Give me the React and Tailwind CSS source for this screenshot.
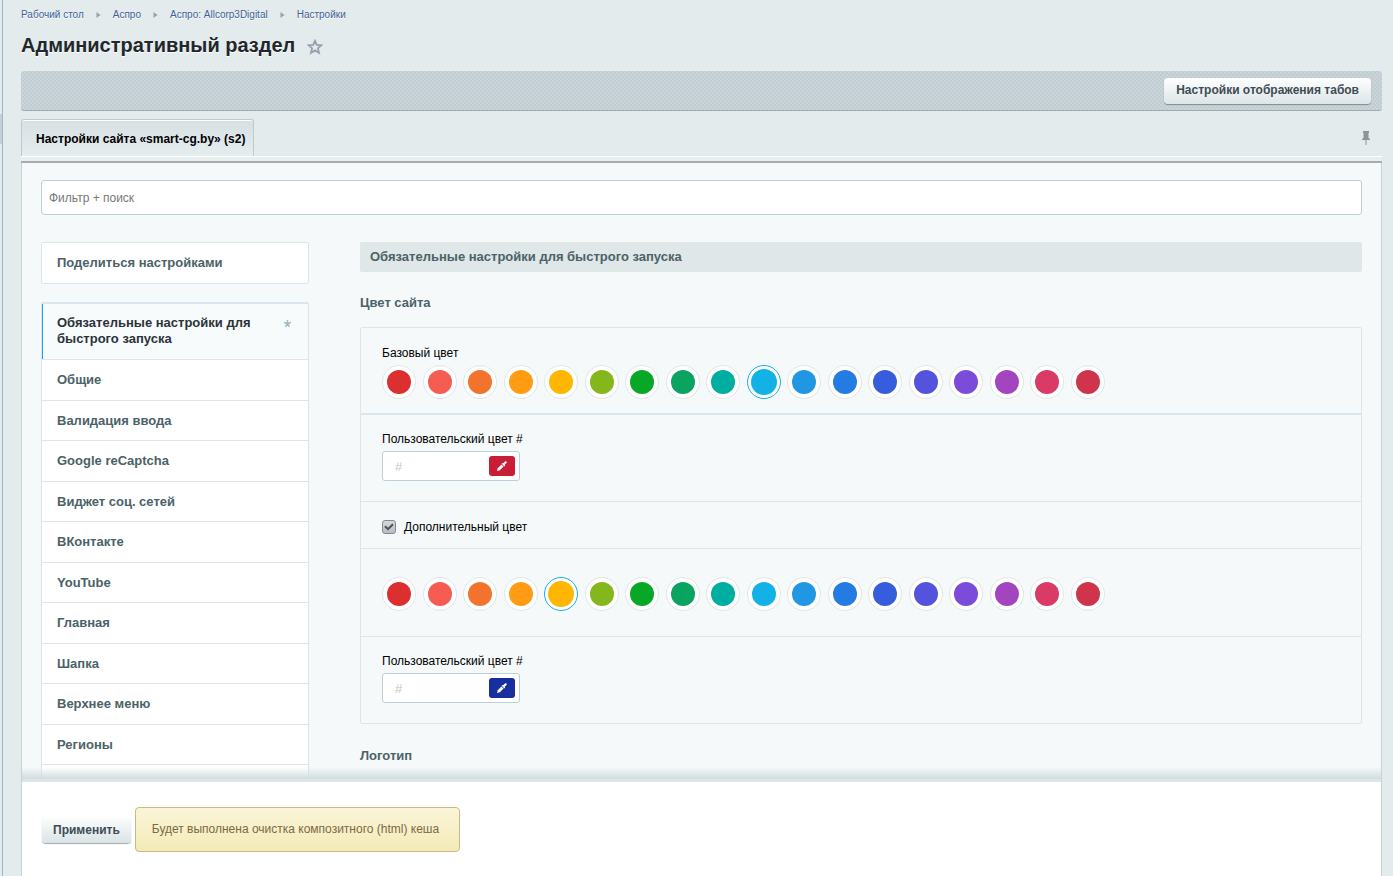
import React, { useState } from "react";

const crumbs = ["Рабочий стол", "Аспро", "Аспро: Allcorp3Digital", "Настройки"];

const sections = [
  "Общие",
  "Валидация ввода",
  "Google reCaptcha",
  "Виджет соц. сетей",
  "ВКонтакте",
  "YouTube",
  "Главная",
  "Шапка",
  "Верхнее меню",
  "Регионы",
];

const colors = [
  { value: "dc3030", className: "bg-[#dc3030]" },
  { value: "f55d53", className: "bg-[#f55d53]" },
  { value: "f2732b", className: "bg-[#f2732b]" },
  { value: "ff9c14", className: "bg-[#ff9c14]" },
  { value: "ffb600", className: "bg-[#ffb600]" },
  { value: "84b71b", className: "bg-[#84b71b]" },
  { value: "08a826", className: "bg-[#08a826]" },
  { value: "0ba360", className: "bg-[#0ba360]" },
  { value: "00ada1", className: "bg-[#00ada1]" },
  { value: "12b2e7", className: "bg-[#12b2e7]" },
  { value: "2196e2", className: "bg-[#2196e2]" },
  { value: "247ce3", className: "bg-[#247ce3]" },
  { value: "365edc", className: "bg-[#365edc]" },
  { value: "5553db", className: "bg-[#5553db]" },
  { value: "7b4cd9", className: "bg-[#7b4cd9]" },
  { value: "a345be", className: "bg-[#a345be]" },
  { value: "da3a66", className: "bg-[#da3a66]" },
  { value: "d0344c", className: "bg-[#d0344c]" },
];

function ColorSwatches({ name, label, initial }) {
  const [selected, setSelected] = useState(initial);

  return (
    <div
      role="radiogroup"
      aria-label={label}
      className="flex max-w-[723px] justify-between"
    >
      {colors.map((color) => (
        <label
          key={color.value}
          aria-label={`#${color.value}`}
          className="relative flex size-[34px] cursor-pointer items-center justify-center rounded-full border border-[#e3e6e6] bg-white has-checked:border-[#12b2e7]"
        >
          <input
            type="radio"
            name={name}
            value={color.value}
            checked={selected === color.value}
            onChange={() => setSelected(color.value)}
            className="peer absolute inset-0 cursor-pointer opacity-0"
          />
          <span
            className={`size-6 rounded-full peer-checked:size-[26px] ${color.className}`}
          />
        </label>
      ))}
    </div>
  );
}

function CustomColor({ id, buttonClass }) {
  const [value, setValue] = useState("");

  return (
    <div className="border-t border-[#dbe6ec] px-[21px] pt-4 pb-5">
      <label htmlFor={id} className="block leading-4">
        Пользовательский цвет #
      </label>
      <div className="mt-1 flex h-[30px] w-[138px] items-center rounded-[3px] border border-[#bdd0d9] bg-white pr-1">
        <input
          id={id}
          type="text"
          placeholder="#"
          value={value}
          onChange={(e) => setValue(e.target.value)}
          className="h-full min-w-0 flex-1 pl-3 text-[13px] outline-none placeholder:text-[#c3c6c8]"
        />
        <button
          type="button"
          aria-label="Выбрать цвет"
          className={`flex h-5 w-[26px] items-center justify-center rounded-[3px] text-white ${buttonClass}`}
        >
          <svg width="10" height="10" viewBox="0 0 10 10" fill="currentColor">
            <path d="M0 10L0.8 7.2L4.4 3.4L6.6 5.6L2.8 9.2Z" />
            <path d="M4.6 2.6L5.6 1.9L6.2 2.3L7.7 0.7C8.9 -0.6 10.6 1.1 9.3 2.3L7.7 3.8L8.1 4.4L7.4 5.4Z" />
          </svg>
        </button>
      </div>
    </div>
  );
}

function Header() {
  return (
    <header>
      <nav className="flex h-[29px] items-center gap-3 text-[10px] text-[#3f5f96]">
        {crumbs.map((crumb, index) => (
          <React.Fragment key={crumb}>
            {index > 0 && (
              <svg width="5" height="6" viewBox="0 0 5 6" fill="#98a4aa">
                <path d="M0.5 0L4.5 3L0.5 6Z" />
              </svg>
            )}
            <a href="#" className="[text-shadow:0_1px_0_#fff]">
              {crumb}
            </a>
          </React.Fragment>
        ))}
      </nav>

      <div className="flex h-[42px] items-start gap-3 pt-1">
        <h1 className="text-[20px] leading-6 font-bold text-[#23272b] [text-shadow:0_1px_0_#fff]">
          Административный раздел
        </h1>
        <button type="button" aria-label="В избранное" className="mt-1.5">
          <svg
            width="16"
            height="16"
            viewBox="0 0 16 16"
            fill="none"
            stroke="#97a1ad"
            strokeWidth="1.8"
          >
            <path d="M8 1.8L9.8 5.9L14.4 6.3L10.9 9.3L12 13.9L8 11.4L4 13.9L5.1 9.3L1.6 6.3L6.2 5.9Z" />
          </svg>
        </button>
      </div>
    </header>
  );
}

function Sidebar() {
  return (
    <nav className="w-[268px] shrink-0 text-[13px] font-bold text-[#4b6267]">
      <a
        href="#"
        className="flex h-[42px] items-center rounded-xs border border-[#dbe6ec] bg-white px-[15px]"
      >
        Поделиться настройками
      </a>

      <div className="mt-[18px] rounded-xs border border-t-2 border-[#dbe6ec] bg-white pb-6">
        <a
          href="#"
          className="flex h-[55px] justify-between border-l border-[#12a9ee] bg-[#f7fbfc] pt-[11px] pr-4 pl-3.5 leading-4 text-[#2b3338]"
        >
          <span className="w-[200px]">Обязательные настройки для быстрого запуска</span>
          <svg
            width="9"
            height="9"
            viewBox="0 0 9 9"
            className="mt-1"
            stroke="#a3bbc3"
            strokeWidth="1.5"
          >
            <path d="M4.5 4.5V1M4.5 4.5L1 3.5M4.5 4.5L8 3.5M4.5 4.5L2.5 7.8M4.5 4.5L6.5 7.8" />
          </svg>
        </a>
        <ul className="border-b border-[#dbe6ec]">
          {sections.map((section) => (
            <li key={section} className="odd:h-[41px] even:h-10">
              <a
                href="#"
                className="flex h-full items-center border-t border-[#dbe6ec] px-[15px]"
              >
                {section}
              </a>
            </li>
          ))}
        </ul>
      </div>
    </nav>
  );
}

function ColorSettings() {
  const [extra, setExtra] = useState(true);

  return (
    <section className="min-w-0 flex-1 text-[12px] text-black">
      <h2 className="h-[30px] rounded-xs bg-[#dfe7e8] px-2.5 text-[13px] leading-[30px] font-bold text-[#4b6267]">
        Обязательные настройки для быстрого запуска
      </h2>
      <h3 className="mt-[23px] text-[13px] leading-4 font-bold text-[#4b6267]">
        Цвет сайта
      </h3>

      <div className="mt-4 rounded-xs border border-[#dbe6ec]">
        <div className="px-[21px] pt-[17px] pb-3.5">
          <p className="mb-1 leading-4">Базовый цвет</p>
          <ColorSwatches name="base" label="Базовый цвет" initial="12b2e7" />
        </div>
        <div className="border-t border-[#dbe6ec]">
          <CustomColor id="base-custom" buttonClass="bg-[#c91c37]" />
        </div>

        <div className="border-t border-[#dbe6ec] px-[21px]">
          <label className="flex h-[46px] items-center gap-2 pt-1">
            <span className="relative flex">
              <input
                type="checkbox"
                checked={extra}
                onChange={(e) => setExtra(e.target.checked)}
                className="peer size-3.5 appearance-none rounded-[3px] border border-[#84898d] bg-linear-to-b from-[#d5dadc] to-[#b7bdc1]"
              />
              <svg
                width="14"
                height="14"
                viewBox="0 0 14 14"
                fill="none"
                stroke="#4b5257"
                strokeWidth="2"
                className="pointer-events-none absolute inset-0 hidden peer-checked:block"
              >
                <path d="M3 6.2L6 9.2L11 4.2" />
              </svg>
            </span>
            Дополнительный цвет
          </label>
        </div>

        <div className="border-t border-[#dbe6ec] px-[21px] pt-7 pb-[25px]">
          <ColorSwatches name="extra" label="Дополнительный цвет" initial="ffb600" />
        </div>
        <CustomColor id="extra-custom" buttonClass="bg-[#182fa0]" />
      </div>

      <h3 className="mt-6 text-[13px] leading-4 font-bold text-[#4b6267]">
        Логотип
      </h3>
    </section>
  );
}

export default function App() {
  return (
    <div className="flex h-screen bg-[#e3ebed] font-['Liberation_Sans',Arial,sans-serif]">
      <div className="w-[3px] shrink-0 border-r border-[#9fb8c8] pt-[114px]">
        <div className="h-[30px] bg-[#c5d0d6]" />
      </div>

      <div className="flex min-w-0 flex-1 flex-col pr-[11px] pl-[18px]">
        <Header />

        <div className="flex h-10 shrink-0 items-center justify-end rounded-[3px] border-b border-[#a0abae] bg-[#cad5d9] bg-[radial-gradient(#c0ccd1_25%,transparent_25%),radial-gradient(#c0ccd1_25%,transparent_25%)] bg-[size:4px_4px] bg-[position:0_0,2px_2px] px-[11px]">
          <button
            type="button"
            className="h-[26px] rounded-[4px] bg-linear-to-b from-white to-[#dbe5e8] px-3 pb-0.5 text-[12px] font-bold text-[#3f4b54] shadow-[0_1px_1px_#7f8b90]"
          >
            Настройки отображения табов
          </button>
        </div>

        <div className="mt-2 flex shrink-0 items-end justify-between">
          <button
            type="button"
            className="h-[37px] rounded-t-[3px] border border-b-0 border-[#c0cacd] bg-linear-to-b from-[#d6dfe2] to-[#e5edef] pt-0.5 pr-2 pl-3.5 text-[12px] font-bold text-black shadow-[inset_0_1px_0_#fff]"
          >
            Настройки сайта «smart-cg.by» (s2)
          </button>
          <button type="button" aria-label="Закрепить" className="mr-[11px] mb-2.5">
            <svg width="10" height="16" viewBox="0 0 10 16" fill="#8b959a">
              <path d="M2 1H8V3H7.5V8L9 9V10H1V9L2.5 8V3H2Z" />
              <path d="M4.5 10H5.5V15H4.5Z" />
            </svg>
          </button>
        </div>
        <div className="h-[7px] shrink-0 border-t border-b-2 border-t-white border-b-[#a5adaf] bg-[#e8eff0]" />

        <main className="flex min-h-0 flex-1 flex-col border-x border-[#c8d2d4] bg-[#f5f9fa]">
          <div className="min-h-0 flex-1 overflow-y-auto px-[19px] pt-[17px] [scrollbar-width:none]">
            <input
              type="search"
              aria-label="Фильтр + поиск"
              placeholder="Фильтр + поиск"
              className="h-[35px] w-full rounded-[3px] border border-[#bdd0d9] bg-white px-[7px] text-[12px] outline-none placeholder:text-[#777]"
            />
            <div className="mt-[27px] flex gap-[51px]">
              <Sidebar />
              <ColorSettings />
            </div>
          </div>

          <footer className="relative flex shrink-0 items-center gap-1 border-t-[3px] border-[#dbe5ea] bg-white px-5 pt-[25px] pb-6">
            <div className="pointer-events-none absolute inset-x-0 -top-[15px] h-3 bg-linear-to-b from-transparent to-[#d2dcde]" />
            <button
              type="button"
              className="h-[27px] rounded-[4px] bg-linear-to-b from-white to-[#d9e3e6] px-[11px] text-[12px] font-bold text-[#3f4b54] shadow-[0_1px_1px_#a0a8ac]"
            >
              Применить
            </button>
            <p className="rounded-[4px] border border-[#c9b983] bg-linear-to-b from-[#fbf5d8] to-[#f4eab8] py-3.5 pr-5 pl-4 text-[12px] leading-[15px] text-[#7a6a45]">
              Будет выполнена очистка композитного (html) кеша
            </p>
          </footer>
        </main>
      </div>
    </div>
  );
}
